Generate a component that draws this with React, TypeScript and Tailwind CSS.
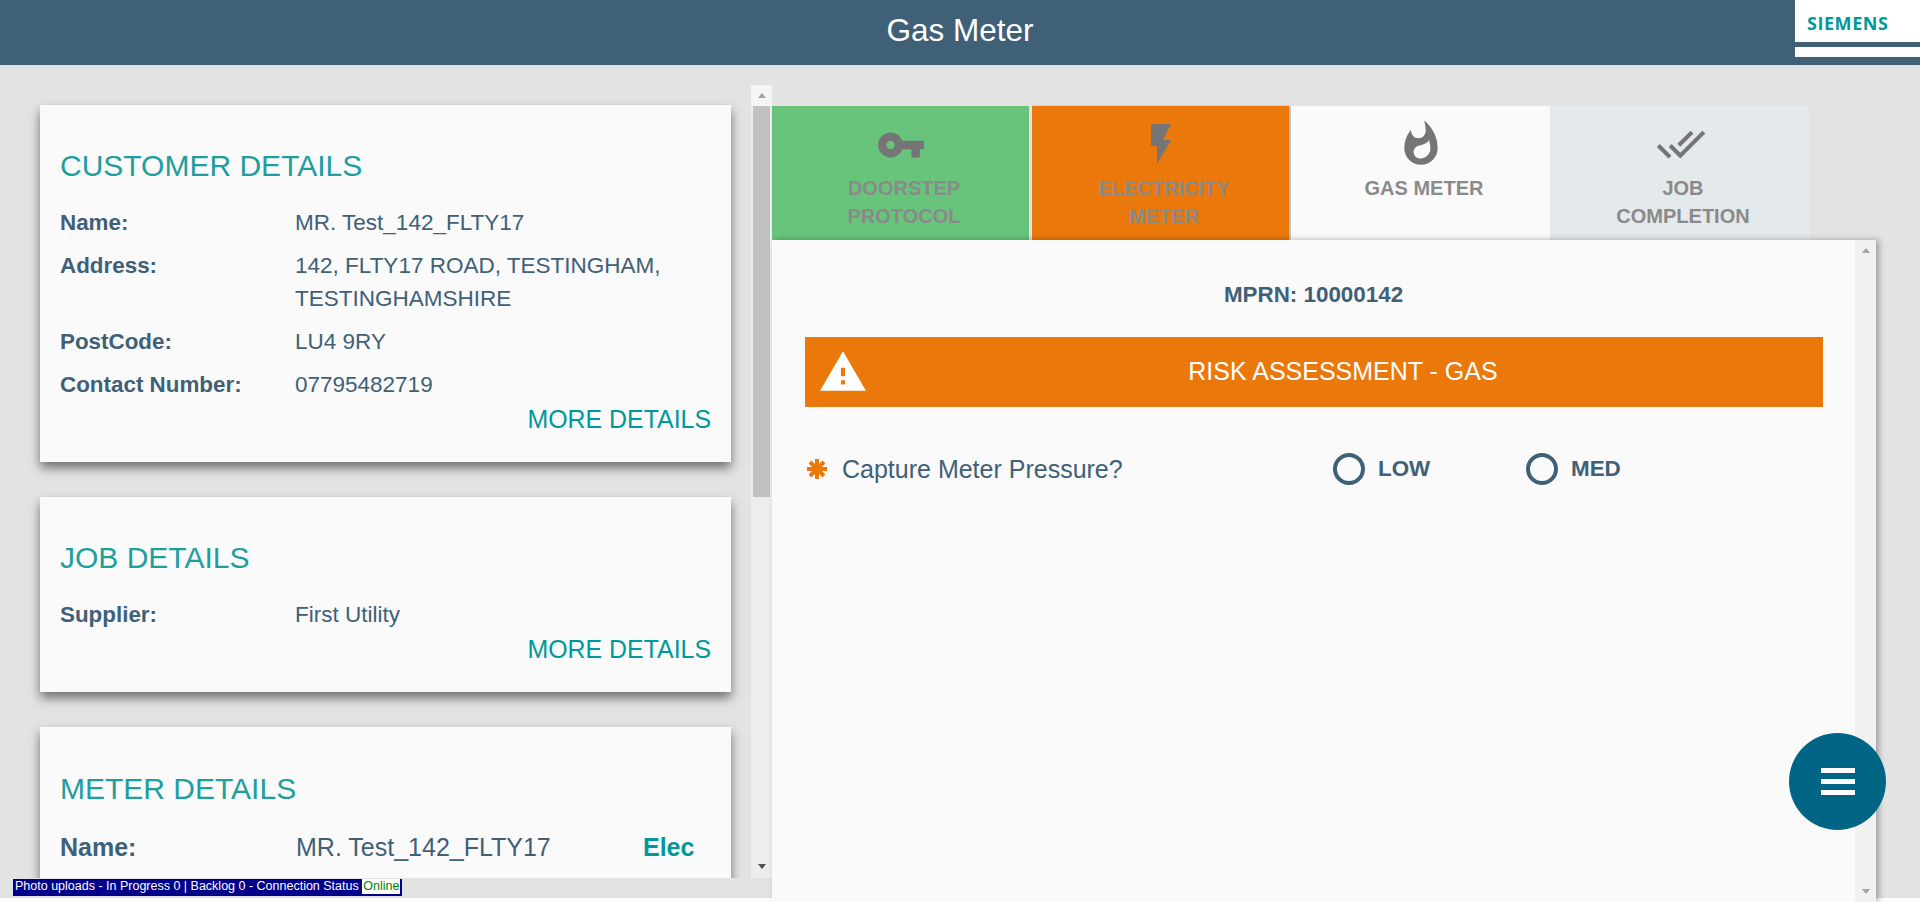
import React from "react";
import { MdVpnKey, MdFlashOn, MdWhatshot, MdDoneAll, MdWarning } from "react-icons/md";

const font = { fontFamily: '"Liberation Sans", Arial, sans-serif' };

function Row({ label, value, cls = "" }: { label: string; value: React.ReactNode; cls?: string }) {
  return (
    <div className={`flex ${cls}`}>
      <div className="w-[234px] shrink-0 font-bold">{label}</div>
      <div className="flex-1 text-[22.5px] pl-px">{value}</div>
    </div>
  );
}

function Card({ title, children, cls = "" }: { title: string; children: React.ReactNode; cls?: string }) {
  return (
    <section className={`w-[691px] shrink-0 bg-[#fafafa] px-5 shadow-[0_6px_10px_rgba(0,0,0,0.5)] text-[#3f6076] text-[22.4px] leading-[33px] ${cls}`}>
      <h2 className="text-[30px] leading-8 text-[#1f9e9e] mb-[24px]">{title}</h2>
      {children}
    </section>
  );
}

function More() {
  return <div className="text-right text-[#009999] text-[24.9px] leading-8 mt-[2px]">MORE DETAILS</div>;
}

function Tab({ bg, icon, lines, cls = "", iconCls = "" }: { bg: string; icon: React.ReactNode; lines: string[]; cls?: string; iconCls?: string }) {
  return (
    <div className={`h-[134px] flex flex-col items-center ${bg} ${cls}`}>
      <div className={`h-[70px] flex items-center justify-center text-[#757575] ${iconCls}`}>{icon}</div>
      <div className="text-[20px] leading-7 font-bold text-[#8a8a8a] text-center -mt-[2px] pl-[7px]">
        {lines.map((l) => (
          <div key={l}>{l}</div>
        ))}
      </div>
    </div>
  );
}

function ArrowUp({ color = "#a3a3a3" }: { color?: string }) {
  return <div className="w-0 h-0 border-x-[4px] border-x-transparent border-b-[5px]" style={{ borderBottomColor: color }} />;
}
function ArrowDown({ color = "#505050" }: { color?: string }) {
  return <div className="w-0 h-0 border-x-[4px] border-x-transparent border-t-[5px]" style={{ borderTopColor: color }} />;
}

function Radio({ label, cls = "" }: { label: string; cls?: string }) {
  return (
    <div className={`flex items-center gap-[13px] ${cls}`}>
      <div className="w-[32px] h-[32px] rounded-full border-[4px] border-[#3f6076]" />
      <span className="text-[22.4px] font-bold text-[#3f6076]">{label}</span>
    </div>
  );
}

export default function App() {
  return (
    <div className="relative h-[902px] w-[1920px] overflow-hidden bg-white" style={font}>
      <header className="relative h-[65px] bg-[#3f6076] flex items-center justify-center">
        <h1 className="text-[31.5px] text-white pb-[4px]">Gas Meter</h1>
        <div className="absolute right-0 top-0 w-[125px] h-[57px] bg-white">
          <div className="pl-[12px] pt-[13px] text-[18px] leading-[20px] font-bold font-['Open_Sans'] tracking-[0.55px] text-[#009999]">SIEMENS</div>
          <div className="absolute left-0 right-0 top-[42px] h-[5px] bg-[#3f6076]" />
        </div>
      </header>

      <div className="h-[833px] bg-[#e3e3e3] flex">
        <div className="w-[751px] h-[813px] shrink-0 overflow-hidden pl-[40px] pt-[40px] flex flex-col">
          <Card title="CUSTOMER DETAILS" cls="h-[357px] pt-[45px] mb-[35px]">
            <Row label="Name:" value="MR. Test_142_FLTY17" cls="mb-[10px]" />
            <Row label="Address:" value={<>142, FLTY17 ROAD, TESTINGHAM, TESTINGHAMSHIRE</>} cls="mb-[10px]" />
            <Row label="PostCode:" value="LU4 9RY" cls="mb-[10px]" />
            <Row label="Contact Number:" value="07795482719" />
            <More />
          </Card>
          <Card title="JOB DETAILS" cls="h-[195px] pt-[45px] mb-[35px]">
            <Row label="Supplier:" value="First Utility" />
            <More />
          </Card>
          <Card title="METER DETAILS" cls="h-[300px] pt-[46px]">
            <div className="flex text-[25px] mt-[26px]">
              <div className="w-[236px] shrink-0 font-bold">Name:</div>
              <div className="w-[347px]">MR. Test_142_FLTY17</div>
              <div className="font-bold text-[#009999]">Elec</div>
            </div>
          </Card>
        </div>

        <div className="w-[21px] h-[793px] mt-[20px] shrink-0 bg-[#ededed] flex flex-col">
          <div className="h-[21px] bg-[#f5f5f5] flex items-center justify-center"><ArrowUp /></div>
          <div className="h-[391px] mx-[2px] bg-[#c1c1c1]" />
          <div className="flex-1" />
          <div className="h-[24px] flex items-center justify-center"><ArrowDown /></div>
        </div>

        <div className="flex-1 pt-[41px]">
          <div className="flex h-[134px]">
            <Tab bg="bg-[#67c47a]" lines={["DOORSTEP", "PROTOCOL"]} icon={<MdVpnKey size={50} />} cls="w-[257px] mr-[3px]" iconCls="pt-[7px]" />
            <Tab bg="bg-[#eb780b]" lines={["ELECTRICITY", "METER"]} icon={<MdFlashOn size={48} />} cls="w-[257px] mr-[2px] shadow-[2px_0_2px_rgba(0,0,0,0.2)]" iconCls="pt-[5px]" />
            <Tab bg="bg-[#fafafa]" lines={["GAS METER"]} icon={<MdWhatshot size={50} />} cls="w-[259px]" iconCls="pt-[5px]" />
            <Tab bg="bg-[#e4e9ec]" lines={["JOB", "COMPLETION"]} icon={<MdDoneAll size={50} />} cls="w-[259px]" iconCls="pt-[5px] pl-[2px]" />
          </div>
          <div className="relative z-10 w-[1104px] h-[662px] flex bg-[#fafafa] shadow-[3px_0_6px_rgba(0,0,0,0.3)]">
            <div className="w-[1083px] px-[33px]">
              <div className="h-[97px] pt-[41px] text-center text-[22.4px] leading-[28px] font-bold text-[#3f6076]">MPRN: 10000142</div>
              <div className="w-[1018px] h-[70px] bg-[#eb780b] flex items-center text-white">
                <div className="w-[63px] flex justify-end shrink-0"><MdWarning size={50} /></div>
                <div className="flex-1 text-center text-[25px] pr-[5px]">RISK ASSESSMENT - GAS</div>
              </div>
              <div className="flex items-center mt-[46px] h-[32px]">
                <svg width="20" height="20" viewBox="0 0 20 20" className="ml-[2px] shrink-0" stroke="#eb780b" strokeWidth="4">
                  <line x1="10" y1="0" x2="10" y2="20" />
                  <line x1="0" y1="10" x2="20" y2="10" />
                  <line x1="3" y1="3" x2="17" y2="17" />
                  <line x1="17" y1="3" x2="3" y2="17" />
                </svg>
                <span className="ml-[15px] w-[491px] text-[25px] text-[#3f6076] pt-[2px]">Capture Meter Pressure?</span>
                <Radio label="LOW" cls="w-[193px]" />
                <Radio label="MED" />
              </div>
            </div>
            <div className="w-[21px] bg-[#f1f1f1] flex flex-col justify-between items-center py-[8px]">
              <ArrowUp />
              <ArrowDown color="#a3a3a3" />
            </div>
          </div>
        </div>
      </div>

      <div className="absolute left-[13px] top-[879px] h-[17px] flex items-start bg-[#00008b] text-white text-[12.5px] leading-[15px] pl-[2px] whitespace-nowrap">
        Photo uploads - In Progress 0 | Backlog 0 - Connection Status&nbsp;<span className="bg-white text-[#008000] h-[15px] px-px mr-[2px]">Online</span>
      </div>

      <button className="absolute left-[1789px] top-[733px] w-[97px] h-[97px] rounded-full bg-[#006484] z-20 flex flex-col items-center justify-center gap-[6px]">
        <span className="block w-[34px] h-[5px] bg-white" />
        <span className="block w-[34px] h-[5px] bg-white" />
        <span className="block w-[34px] h-[5px] bg-white" />
      </button>
    </div>
  );
}
